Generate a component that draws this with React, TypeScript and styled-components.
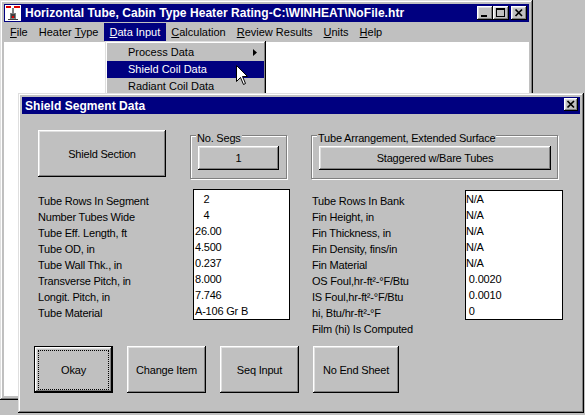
import React from "react";
import styled, { createGlobalStyle, css } from "styled-components";

const GlobalStyle = createGlobalStyle`
  * { box-sizing: border-box; }
  html, body { margin: 0; padding: 0; background: #c0c0c0; }
  body {
    font-family: "Liberation Sans", Arial, sans-serif;
    font-size: 11px;
    color: #000;
    overflow: hidden;
  }
  button { font: inherit; color: inherit; }
`;

const windowFrame = css`
  box-shadow: inset -1px -1px 0 #000, inset 1px 1px 0 #dfdfdf,
    inset -2px -2px 0 #808080, inset 2px 2px 0 #fff;
`;

const buttonBevel = css`
  box-shadow: inset -1px -1px 0 #000, inset 1px 1px 0 #fff,
    inset -2px -2px 0 #808080, inset 2px 2px 0 #dfdfdf;
`;

const defaultBevel = css`
  box-shadow: inset 0 0 0 1px #000, inset -2px -2px 0 #000, inset 2px 2px 0 #fff,
    inset -3px -3px 0 #808080, inset 3px 3px 0 #dfdfdf;
`;

const Desktop = styled.div`
  position: relative;
  width: 585px;
  height: 415px;
  background: #c0c0c0;
  overflow: hidden;
`;

const Win = styled.div<{ $x: number; $y: number; $w: number; $h: number }>`
  position: absolute;
  left: ${(p) => p.$x}px;
  top: ${(p) => p.$y}px;
  width: ${(p) => p.$w}px;
  height: ${(p) => p.$h}px;
  padding: 4px;
  background: #c0c0c0;
  display: flex;
  flex-direction: column;
  ${windowFrame}
`;

const TitleBar = styled.div<{ $h: number }>`
  height: ${(p) => p.$h}px;
  flex: none;
  background: #000080;
  color: #fff;
  display: flex;
  align-items: center;
  padding: 0 2px 0 1px;
  gap: 4px;
  font-weight: bold;
  font-size: 12px;
  white-space: nowrap;
`;

const TitleText = styled.span<{ $pl?: number }>`
  flex: 1;
  padding-left: ${(p) => p.$pl ?? 0}px;
  line-height: 14px;
  letter-spacing: 0.05px;
`;

const CaptionGroup = styled.div`
  display: flex;
  align-items: center;
`;

const CaptionBtn = styled.div<{ $w?: number; $h?: number; $gap?: number; $top?: boolean }>`
  width: ${(p) => p.$w ?? 16}px;
  height: ${(p) => p.$h ?? 14}px;
  margin-left: ${(p) => p.$gap ?? 0}px;
  align-self: ${(p) => (p.$top ? "flex-start" : "center")};
  margin-top: ${(p) => (p.$top ? 1 : 0)}px;
  background: #c0c0c0;
  display: flex;
  align-items: center;
  justify-content: center;
  ${buttonBevel}
`;

const MenuBar = styled.div`
  height: 20px;
  flex: none;
  display: flex;
  align-items: center;
  padding-left: 0.5px;
`;

const MenuItem = styled.div<{ $active?: boolean }>`
  height: 18px;
  line-height: 18px;
  padding: 0 5.5px;
  background: ${(p) => (p.$active ? "#000080" : "transparent")};
  color: ${(p) => (p.$active ? "#fff" : "#000")};
  white-space: nowrap;
`;

const Client = styled.div`
  flex: 1;
  background: #fff;
`;

const DropMenu = styled.div`
  position: absolute;
  left: 105px;
  top: 41px;
  width: 161px;
  padding: 3px 2px;
  background: #c0c0c0;
  ${windowFrame}
`;

const DropItem = styled.div<{ $active?: boolean }>`
  height: 17px;
  line-height: 17px;
  padding: 0 7px 0 21px;
  display: flex;
  align-items: center;
  justify-content: space-between;
  background: ${(p) => (p.$active ? "#000080" : "transparent")};
  color: ${(p) => (p.$active ? "#fff" : "#000")};
  white-space: nowrap;
`;

const Pointer = styled.svg`
  position: absolute;
  left: 236px;
  top: 65px;
`;

const DialogBody = styled.div`
  flex: 1;
  display: flex;
  flex-direction: column;
  padding: 16px 0 0 12px;
  letter-spacing: -0.2px;
`;

const TopRow = styled.div`
  display: flex;
  align-items: flex-start;
  gap: 24px;
  padding-left: 4px;
`;

const PushButton = styled.div<{ $w: number; $h: number; $default?: boolean }>`
  width: ${(p) => p.$w}px;
  height: ${(p) => p.$h}px;
  flex: none;
  background: #c0c0c0;
  display: flex;
  align-items: center;
  justify-content: center;
  white-space: nowrap;
  ${(p) => (p.$default ? defaultBevel : buttonBevel)}
`;

const FocusRing = styled.span`
  align-self: stretch;
  flex: 1;
  margin: 4px 4px 3px 4px;
  border: 1px dotted #000;
  display: flex;
  align-items: center;
  justify-content: center;
`;

const GroupBox = styled.div<{ $w: number }>`
  position: relative;
  width: ${(p) => p.$w}px;
  height: 44px;
  margin-top: 5px;
  border: 1px solid #808080;
  box-shadow: 1px 1px 0 #fff, inset 1px 1px 0 #fff;
  padding: 10px 0 0 7px;
`;

const GroupLabel = styled.span`
  position: absolute;
  top: -4px;
  left: 5px;
  padding: 0 1px;
  line-height: 13px;
  background: #c0c0c0;
  white-space: nowrap;
`;

const DataRow = styled.div`
  display: flex;
  align-items: flex-start;
  margin-top: 10px;
  padding-left: 4px;
`;

const LabelCol = styled.div<{ $w: number; $ml?: number }>`
  width: ${(p) => p.$w}px;
  margin-left: ${(p) => p.$ml ?? 0}px;
  flex: none;
  padding-top: 4px;
  display: flex;
  flex-direction: column;
  line-height: 16px;
  white-space: nowrap;
`;

const ValueBox = styled.div<{ $w: number; $h: number; $mt?: number; $pt?: number; $pl?: number }>`
  width: ${(p) => p.$w}px;
  height: ${(p) => p.$h}px;
  margin-top: ${(p) => p.$mt ?? 0}px;
  flex: none;
  background: #fff;
  border: 1px solid #000;
  padding: ${(p) => p.$pt ?? 0}px 0 0 ${(p) => p.$pl ?? 0}px;
  display: flex;
  flex-direction: column;
  line-height: 16px;
  white-space: pre;
`;

const ButtonRow = styled.div`
  display: flex;
  gap: 14px;
  margin-top: 9px;
`;

const AppIcon = () => (
  <svg width="16" height="16" viewBox="0 0 16 16" shapeRendering="crispEdges">
    <rect width="16" height="16" fill="#fff" />
    <rect x="1" y="1" width="5" height="2" fill="#e00000" />
    <rect x="9" y="1" width="6" height="2" fill="#e00000" />
    <rect x="7" y="3" width="2" height="5" fill="#808080" />
    <rect x="5" y="8" width="6" height="6" fill="#808080" />
    <rect x="6" y="9" width="4" height="4" fill="#404040" />
    <rect x="7" y="11" width="2" height="2" fill="#e00000" />
    <rect x="3" y="14" width="10" height="1" fill="#404040" />
  </svg>
);

const MinGlyph = () => (
  <svg width="16" height="14" viewBox="0 0 16 14" shapeRendering="crispEdges">
    <rect x="4" y="9" width="6" height="2" fill="#000" />
  </svg>
);

const MaxGlyph = () => (
  <svg width="16" height="14" viewBox="0 0 16 14" shapeRendering="crispEdges">
    <rect x="3.5" y="2.5" width="8" height="8" fill="none" stroke="#000" />
    <rect x="3" y="3" width="9" height="1" fill="#000" />
  </svg>
);

const CloseGlyph = ({ w = 16, h = 14 }: { w?: number; h?: number }) => (
  <svg width={w} height={h} viewBox={`0 0 ${w} ${h}`}>
    <path
      d={`M${w / 2 - 3.5} ${h / 2 - 3.5} L${w / 2 + 3} ${h / 2 + 3} M${w / 2 + 3} ${h / 2 - 3.5} L${w / 2 - 3.5} ${h / 2 + 3}`}
      stroke="#000"
      strokeWidth="1.7"
    />
  </svg>
);

const SubArrow = () => (
  <svg width="4" height="7" viewBox="0 0 4 7">
    <path d="M0 0 L4 3.5 L0 7 Z" fill="#000" />
  </svg>
);

const leftLabels = [
  "Tube Rows In Segment",
  "Number Tubes Wide",
  "Tube Eff. Length, ft",
  "Tube OD, in",
  "Tube Wall Thk., in",
  "Transverse Pitch, in",
  "Longit. Pitch, in",
  "Tube Material",
];

const leftValues = ["   2", "   4", "26.00", "4.500", "0.237", "8.000", "7.746", "A-106 Gr B"];

const rightLabels = [
  "Tube Rows In Bank",
  "Fin Height, in",
  "Fin Thickness, in",
  "Fin Density, fins/in",
  "Fin Material",
  "OS Foul,hr-ft²-°F/Btu",
  "IS Foul,hr-ft²-°F/Btu",
  "hi, Btu/hr-ft²-°F",
  "Film (hi) Is Computed",
];

const rightValues = ["N/A", "N/A", "N/A", "N/A", "N/A", " 0.0020", " 0.0010", " 0"];

const menus: [string, string][] = [
  ["F", "ile"],
  ["", "Heater |T|ype"],
  ["D", "ata Input"],
  ["C", "alculation"],
  ["R", "eview Results"],
  ["U", "nits"],
  ["H", "elp"],
];

export default function App() {
  return (
    <>
      <GlobalStyle />
      <Desktop>
        <Win $x={0} $y={0} $w={533} $h={400}>
          <TitleBar $h={18}>
            <AppIcon />
            <TitleText>Horizontal Tube, Cabin Type Heater Rating-C:\WINHEAT\NoFile.htr</TitleText>
            <CaptionGroup>
              <CaptionBtn>
                <MinGlyph />
              </CaptionBtn>
              <CaptionBtn>
                <MaxGlyph />
              </CaptionBtn>
              <CaptionBtn $gap={2}>
                <CloseGlyph />
              </CaptionBtn>
            </CaptionGroup>
          </TitleBar>
          <MenuBar>
            {menus.map(([u, rest], i) => {
              if (rest.includes("|")) {
                const [a, b, c] = rest.split("|");
                return (
                  <MenuItem key={i}>
                    {a}
                    <u>{b}</u>
                    {c}
                  </MenuItem>
                );
              }
              return (
                <MenuItem key={i} $active={u === "D"}>
                  <u>{u}</u>
                  {rest}
                </MenuItem>
              );
            })}
          </MenuBar>
          <Client />
        </Win>

        <DropMenu>
          <DropItem>
            <span>Process Data</span>
            <SubArrow />
          </DropItem>
          <DropItem $active>
            <span>Shield Coil Data</span>
          </DropItem>
          <DropItem>
            <span>Radiant Coil Data</span>
          </DropItem>
        </DropMenu>

        <Pointer width="13" height="21" viewBox="0 0 13 21">
          <path
            d="M0.5 0.5 L0.5 16.5 L4.5 12.5 L7.5 19.5 L9.5 18.5 L6.5 11.5 L11.5 11.5 Z"
            fill="#fff"
            stroke="#000"
            strokeWidth="1"
          />
        </Pointer>

        <Win $x={18} $y={93} $w={566} $h={320}>
          <TitleBar $h={17}>
            <TitleText $pl={2}>Shield Segment Data</TitleText>
            <CaptionBtn $w={14} $h={13} $top>
              <CloseGlyph w={14} h={13} />
            </CaptionBtn>
          </TitleBar>
          <DialogBody>
            <TopRow>
              <PushButton $w={128} $h={47}>
                Shield Section
              </PushButton>
              <GroupBox $w={97}>
                <GroupLabel>No. Segs</GroupLabel>
                <PushButton $w={81} $h={24}>
                  1
                </PushButton>
              </GroupBox>
              <GroupBox $w={247}>
                <GroupLabel>Tube Arrangement, Extended Surface</GroupLabel>
                <PushButton $w={232} $h={24}>
                  Staggered w/Bare Tubes
                </PushButton>
              </GroupBox>
            </TopRow>

            <DataRow>
              <LabelCol $w={155}>
                {leftLabels.map((l) => (
                  <span key={l}>{l}</span>
                ))}
              </LabelCol>
              <ValueBox $w={97} $h={131} $pt={1} $pl={1}>
                {leftValues.map((v, i) => (
                  <span key={i}>{v}</span>
                ))}
              </ValueBox>
              <LabelCol $w={153} $ml={22}>
                {rightLabels.map((l) => (
                  <span key={l}>{l}</span>
                ))}
              </LabelCol>
              <ValueBox $w={98} $h={130} $mt={1} $pt={0} $pl={0}>
                {rightValues.map((v, i) => (
                  <span key={i}>{v}</span>
                ))}
              </ValueBox>
            </DataRow>

            <ButtonRow>
              <PushButton $w={79} $h={47} $default>
                <FocusRing>Okay</FocusRing>
              </PushButton>
              <PushButton $w={79} $h={47}>
                Change Item
              </PushButton>
              <PushButton $w={79} $h={47}>
                Seq Input
              </PushButton>
              <PushButton $w={86} $h={47}>
                No End Sheet
              </PushButton>
            </ButtonRow>
          </DialogBody>
        </Win>
      </Desktop>
    </>
  );
}
